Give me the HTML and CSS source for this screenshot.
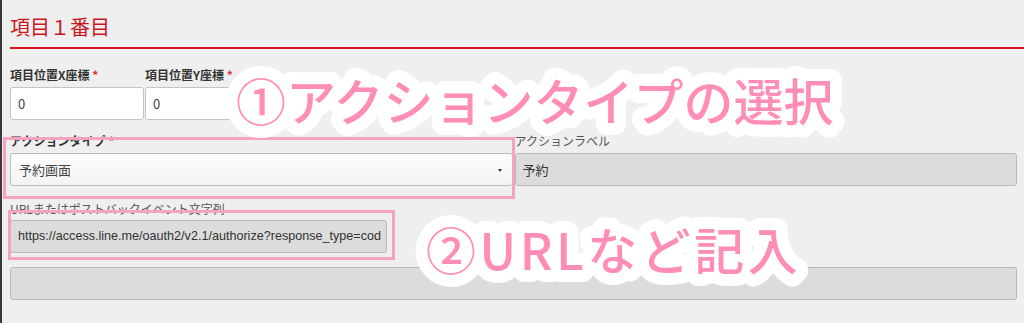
FILE: index.html
```html
<!DOCTYPE html>
<html>
<head>
    <meta charset="utf-8">
    <link rel="stylesheet" href="styles.css">
</head>
<body>
    <div class="panel">
        <h2 class="panel-title">項目１番目</h2>

        <div class="row row-pos">
            <div class="field field-pos">
                <div class="label label-req">項目位置X座標 <span class="star">*</span></div>
                <div class="input">0</div>
            </div>
            <div class="field field-pos">
                <div class="label label-req">項目位置Y座標 <span class="star">*</span></div>
                <div class="input">0</div>
            </div>
        </div>

        <div class="row row-half">
            <div class="field">
                <div class="label label-req">アクションタイプ <span class="star">*</span></div>
                <div class="select">予約画面<span class="caret"></span></div>
            </div>
            <div class="field">
                <div class="label">アクションラベル</div>
                <div class="input input-off">予約</div>
            </div>
        </div>

        <div class="row row-url">
            <div class="field field-url">
                <div class="label">URLまたはポストバックイベント文字列</div>
                <div class="input input-off input-url">https://access.line.me/oauth2/v2.1/authorize?response_type=cod</div>
            </div>
        </div>

        <div class="row row-extra">
            <div class="field field-full">
                <div class="input input-off"></div>
            </div>
        </div>

        <!-- annotation layer -->
        <div class="mark mark-action"></div>
        <div class="mark mark-url"></div>
        <svg class="notes" width="1024" height="323" viewBox="0 0 1024 323">
            <text x="236" y="121">①アクションタイプの選択</text>
            <text class="note-url" x="426" y="270">②URLなど記入</text>
        </svg>
    </div>
</body>
</html>
```

FILE: styles.css
```css
html, body {
    margin: 0;
    padding: 0;
    background: #efefef;
}

body {
    font-family: "Noto Sans CJK JP", "Liberation Sans", sans-serif;
    color: #333;
}

.panel {
    position: relative;
    height: 323px;
    box-sizing: border-box;
    border-left: 2px solid #3a3a3a;
    padding-left: 8px;
    overflow: hidden;
}

.panel-title {
    margin: 0;
    padding: 14px 0 7px;
    font-size: 20px;
    line-height: 26px;
    font-weight: normal;
    color: #c8171e;
    border-bottom: 2px solid #d8151c;
}

.row {
    display: flex;
    margin-right: 7px;
}

.row-pos { margin-top: 18px; gap: 1px; }
.row-half { margin-top: 13px; gap: 2px; }
.row-url { margin-top: 15px; }
.row-extra { margin-top: 14px; }

.row-half .field { flex: 1; }
.field-pos { width: 134px; }
.field-url { width: 377px; }
.field-full { flex: 1; }

.label {
    font-size: 12px;
    line-height: 16px;
    color: #555;
    margin-bottom: 4px;
    white-space: nowrap;
}

.label-req {
    font-weight: bold;
    color: #333;
}

.star {
    color: #d9313a;
}

.row-url .label { margin-bottom: 3px; }

.input, .select {
    box-sizing: border-box;
    height: 33px;
    line-height: 31px;
    padding: 0 7px;
    border: 1px solid #c4c4c4;
    border-radius: 3px;
    background: #fff;
    font-size: 13px;
    color: #444;
    white-space: nowrap;
    overflow: hidden;
}

.input-off {
    background: #dcdcdc;
    border-color: #b9b9b9;
    color: #333;
}

.input-url {
    font-family: "Liberation Sans", "Noto Sans CJK JP", sans-serif;
    font-size: 12.6px;
    padding-left: 7px;
}

.select {
    position: relative;
    background: linear-gradient(#fdfdfd, #f3f3f3);
    border-color: #bdbdbd;
    padding-left: 8px;
}

.caret {
    position: absolute;
    right: 10px;
    top: 15px;
    border-left: 2.5px solid transparent;
    border-right: 2.5px solid transparent;
    border-top: 3px solid #333;
}

.mark {
    position: absolute;
    box-sizing: border-box;
    border: 3px solid #f6a2c2;
}

.mark-action {
    left: 1px;
    top: 137px;
    width: 512px;
    height: 62px;
}

.mark-url {
    left: 6px;
    top: 210px;
    width: 387px;
    height: 50px;
}

.notes {
    position: absolute;
    left: -2px;
    top: 0;
    pointer-events: none;
}

.notes text {
    font-family: "Noto Sans CJK JP", sans-serif;
    font-size: 50px;
    font-weight: 500;
    fill: #ff8db5;
    stroke: #fff;
    stroke-width: 24px;
    stroke-linejoin: round;
    paint-order: stroke;
}

.notes .note-url {
    letter-spacing: 3.5px;
}
```
